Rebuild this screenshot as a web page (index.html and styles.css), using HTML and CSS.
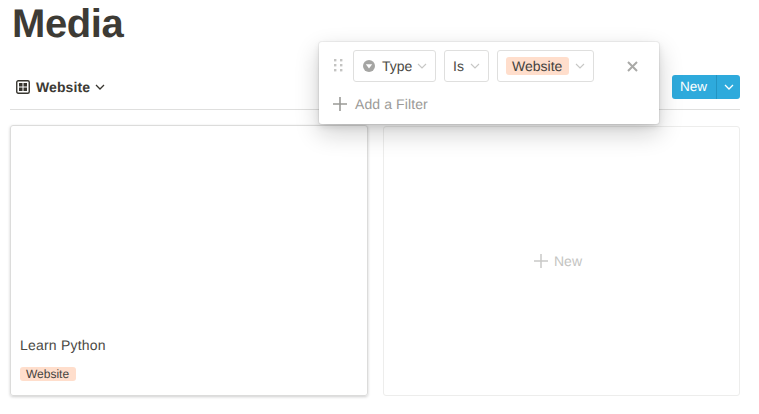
FILE: index.html
```html
<!DOCTYPE html>
<html lang="en">
<head>
<meta charset="utf-8">
<title>Media</title>
<link rel="stylesheet" href="styles.css">
</head>
<body>
<main class="page">
  <h1 class="title">Media</h1>
  <div class="toolbar">
    <div class="view">
      <svg class="view-icon" width="14" height="14" viewBox="0 0 14 14"><rect x="0.75" y="0.75" width="12.5" height="12.5" rx="1.5" fill="none" stroke="#37352f" stroke-width="1.4"/><path d="M3 3h3.5v3.5H3zM7.5 3H11v3.5H7.5zM3 7.5h3.5V11H3zM7.5 7.5H11V11H7.5z" fill="#37352f"/></svg>
      <span class="view-name">Website</span>
      <svg width="10" height="6" viewBox="0 0 10 6"><path d="M1 1l4 4 4-4" fill="none" stroke="#37352f" stroke-width="1.3"/></svg>
    </div>
    <div class="new-btn">
      <span class="new-label">New</span>
      <span class="new-arrow"><svg width="10" height="6" viewBox="0 0 10 6"><path d="M1 1l4 4 4-4" fill="none" stroke="#fff" stroke-width="1.3"/></svg></span>
    </div>
  </div>
  <div class="cards">
    <article class="card card-filled">
      <div class="card-name">Learn Python</div>
      <div class="card-tag"><span class="tag tag-small">Website</span></div>
    </article>
    <article class="card card-empty">
      <svg width="14" height="14" viewBox="0 0 14 14"><path d="M7 0v14M0 7h14" stroke="#c9c9c7" stroke-width="1.5"/></svg>
      <span>New</span>
    </article>
  </div>
</main>
<section class="filter-popup">
  <div class="filter-row">
    <svg class="grip" width="10" height="14" viewBox="0 0 10 14"><g fill="#c4c4c2"><rect x="0" y="0" width="2.4" height="2.4"/><rect x="6" y="0" width="2.4" height="2.4"/><rect x="0" y="5" width="2.4" height="2.4"/><rect x="6" y="5" width="2.4" height="2.4"/><rect x="0" y="10" width="2.4" height="2.4"/><rect x="6" y="10" width="2.4" height="2.4"/></g></svg>
    <div class="select select-type">
      <svg width="12" height="12" viewBox="0 0 12 12"><circle cx="6" cy="6" r="6" fill="#a5a5a3"/><path d="M2.8 4.3h6.4L6 8.4z" fill="#fff"/></svg>
      <span class="select-text">Type</span>
      <svg class="chev chev-type" width="10" height="6" viewBox="0 0 10 6"><path d="M1 1l4 4 4-4" fill="none" stroke="#c7c7c5" stroke-width="1.1"/></svg>
    </div>
    <div class="select select-is">
      <span class="select-text">Is</span>
      <svg class="chev" width="10" height="6" viewBox="0 0 10 6"><path d="M1 1l4 4 4-4" fill="none" stroke="#c7c7c5" stroke-width="1.1"/></svg>
    </div>
    <div class="select select-value">
      <span class="tag">Website</span>
      <svg class="chev" width="10" height="6" viewBox="0 0 10 6"><path d="M1 1l4 4 4-4" fill="none" stroke="#c7c7c5" stroke-width="1.1"/></svg>
    </div>
    <svg class="close" width="11" height="11" viewBox="0 0 11 11"><path d="M1 1l9 9M10 1l-9 9" stroke="#a9a9a7" stroke-width="2"/></svg>
  </div>
  <div class="add-filter">
    <svg width="14" height="14" viewBox="0 0 14 14"><path d="M7 0v14M0 7h14" stroke="#9a9a97" stroke-width="1.6"/></svg>
    <span>Add a Filter</span>
  </div>
</section>
</body>
</html>
```
FILE: styles.css
```css
* { box-sizing: border-box; }
html, body { margin: 0; height: 100%; }
body {
  background: #fff;
  color: #3d3b35;
  font-family: "Liberation Sans", Arial, sans-serif;
  text-rendering: geometricPrecision;
  overflow: hidden;
  position: relative;
}
.page { padding: 0 19px 0 10px; }
.title {
  margin: 0;
  padding-left: 2px;
  height: 70px;
  font-size: 40px;
  line-height: 48px;
  font-weight: 700;
  letter-spacing: -0.4px;
}
.toolbar {
  height: 40px;
  padding: 5px 0 0 6px;
  display: flex;
  justify-content: space-between;
  border-bottom: 1px solid #dfdfde;
}
.view { display: flex; align-items: center; gap: 6px; height: 24px; }
.view-name { font-size: 14px; font-weight: 700; margin-right: -1px; letter-spacing: 0.1px; }
.new-btn {
  display: flex;
  height: 24px;
  background: #2eaadc;
  border-radius: 3px;
  color: #fff;
  font-size: 13.5px;
}
.new-label { width: 44px; padding-left: 8px; line-height: 24px; }
.new-arrow {
  width: 24px;
  border-left: 1px solid #2394c2;
  display: flex;
  align-items: center;
  justify-content: center;
}
.cards {
  margin-top: 16px;
  display: grid;
  grid-template-columns: 358px 357px;
  gap: 15px;
}
.card { height: 270px; border-radius: 3px; }
.card-filled {
  height: 271px;
  margin-top: -1px;
  border: 1px solid #dcdcdb;
  box-shadow: 0 1px 3px rgba(15, 15, 15, 0.2);
  padding: 210px 9px 0 9px;
  font-size: 14px;
  letter-spacing: 0.2px;
}
.card-name { line-height: 18px; color: #4a4843; }
.card-tag { margin-top: 13px; line-height: 14px; display: flex; letter-spacing: 0; }
.card-empty {
  border: 1px solid #ededec;
  color: #c4c4c2;
  font-size: 14px;
  display: flex;
  align-items: center;
  justify-content: center;
  gap: 6px;
  padding-right: 7px;
}
.tag {
  display: inline-block;
  background: #ffdecc;
  border-radius: 3px;
  padding: 0 6px;
  font-size: 14px;
  line-height: 18px;
  color: #45433e;
}
.select .tag { padding: 0 7px 0 6px; }
.tag-small { font-size: 12px; line-height: 14px; padding: 0 6.5px 0 6px; }
.filter-popup {
  position: absolute;
  left: 319px;
  top: 42px;
  width: 340px;
  height: 82px;
  background: #fff;
  border-radius: 3px;
  box-shadow: 0 0 0 1px rgba(15,15,15,0.05), 0 3px 6px rgba(15,15,15,0.1), 0 9px 24px rgba(15,15,15,0.2);
  padding: 8px 0 0 15px;
}
.filter-row { display: flex; align-items: center; height: 32px; }
.grip { margin-right: 9px; }
.select {
  height: 32px;
  border: 1px solid #dfdfde;
  border-radius: 3px;
  display: flex;
  align-items: center;
  font-size: 14px;
  padding-left: 9px;
}
.select-type { width: 83px; gap: 7px; margin-right: 8px; }
.chev-type { margin-left: -2px; }
.select-is { width: 45px; gap: 6px; margin-right: 8px; padding-left: 8px; }
.select-value { width: 97px; gap: 6px; padding-left: 8px; }
.select-text { color: #4b4a45; }
.chev { flex: none; }
.close { margin-left: 33px; }
.add-filter {
  display: flex;
  align-items: center;
  gap: 8px;
  margin: 14px 0 0 -1px;
  height: 16px;
  color: #9b9a97;
  font-size: 14px;
  letter-spacing: 0.1px;
}
```
